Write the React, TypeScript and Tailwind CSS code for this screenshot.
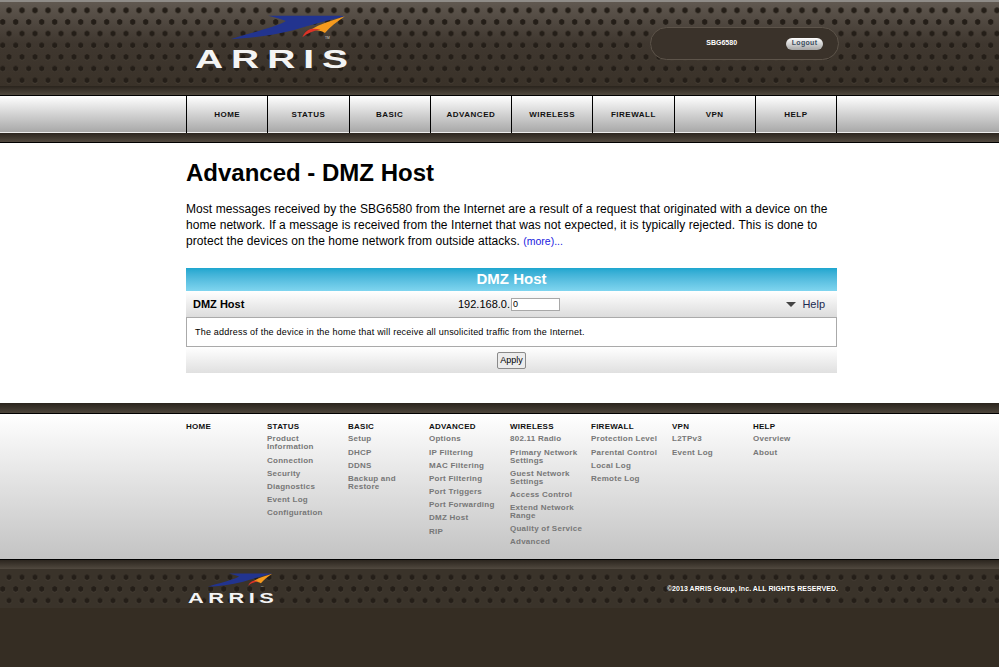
import type { ReactNode } from 'react';

const NAV = ['HOME', 'STATUS', 'BASIC', 'ADVANCED', 'WIRELESS', 'FIREWALL', 'VPN', 'HELP'];

const FOOTER_NAV: { title: string; links: string[] }[] = [
  { title: 'HOME', links: [] },
  { title: 'STATUS', links: ['Product Information', 'Connection', 'Security', 'Diagnostics', 'Event Log', 'Configuration'] },
  { title: 'BASIC', links: ['Setup', 'DHCP', 'DDNS', 'Backup and Restore'] },
  { title: 'ADVANCED', links: ['Options', 'IP Filtering', 'MAC Filtering', 'Port Filtering', 'Port Triggers', 'Port Forwarding', 'DMZ Host', 'RIP'] },
  { title: 'WIRELESS', links: ['802.11 Radio', 'Primary Network Settings', 'Guest Network Settings', 'Access Control', 'Extend Network Range', 'Quality of Service', 'Advanced'] },
  { title: 'FIREWALL', links: ['Protection Level', 'Parental Control', 'Local Log', 'Remote Log'] },
  { title: 'VPN', links: ['L2TPv3', 'Event Log'] },
  { title: 'HELP', links: ['Overview', 'About'] },
];

// perforated metal, two staggered rows of dots in one 13 x 23.33 tile
const DOTS =
  '[background-image:radial-gradient(circle,#241e18_2.4px,transparent_3.1px),radial-gradient(circle,#241e18_2.4px,transparent_3.1px),radial-gradient(circle,#4d453b_2.6px,transparent_3.2px),radial-gradient(circle,#4d453b_2.6px,transparent_3.2px)] [background-size:13px_23.33px] [background-repeat:repeat] [background-position:2.5px_-3.4px,-3.8px_8.3px,2.5px_-3px,-3.8px_8.7px]';

function Logo({ className }: { className: string }) {
  return (
    <svg viewBox="585 40 475 175" className={`overflow-visible ${className}`}>
      <path
        d="M805 48 L1022 48 L1035 50 C985 62 935 76 880 92 C815 108 750 116 692 119 C750 98 820 86 858 64 C845 58 825 53 805 48 Z"
        fill="#22348f"
      />
      <path d="M1035 50 C1000 62 960 72 930 92 C945 90 962 92 975 100 C990 82 1012 66 1035 50 Z" fill="#f59a1e" />
      <path d="M907 113 C912 100 920 92 932 88 C940 87 952 87 962 90 C942 92 922 100 907 113 Z" fill="#dd3326" />
      <text x="975" y="118" fontSize="10" fill="#ccc" fontFamily="'Liberation Sans', sans-serif">TM</text>
      <text
        transform="translate(585 205) scale(1.5 1)"
        fontSize="78"
        fontWeight="700"
        textLength="306"
        fill="#f4f4f4"
        fontFamily="'Liberation Sans', sans-serif"
      >
        ARRIS
      </text>
    </svg>
  );
}

function Band({ children }: { children?: ReactNode }) {
  return (
    <div className="h-[9px] bg-gradient-to-b from-[#2a241d] to-[#51493f]">{children}</div>
  );
}

export default function App() {
  return (
    <div className="h-[667px] w-full overflow-hidden bg-white font-['Liberation_Sans',Arial,sans-serif] text-black">
      {/* header */}
      <header className="bg-gradient-to-b from-[#625a52] via-[#3f372f] to-[#3a3229]">
        <div className="border-t-2 border-[#8f8c88]">
          <div className={`flex h-[84px] items-start ${DOTS}`}>
            <Logo className="ml-[195px] mt-[11px] h-[58.3px] w-[158.3px] shrink-0" />
            <div className="ml-[297px] mt-[25px] flex h-[33px] w-[189px] shrink-0 items-center rounded-full border border-[#5d544a] bg-[#3a322a] pl-[55px]">
              <span className="text-[7px] font-bold text-white">SBG6580</span>
              <button className="ml-[49px] h-[12px] w-[37px] rounded-full bg-gradient-to-b from-white to-[#a5a5a5] text-[7px] font-bold tracking-[0.3px] text-[#3c4e60]">
                Logout
              </button>
            </div>
          </div>
        </div>
      </header>
      <Band />

      {/* main nav */}
      <nav className="h-[38px] border-t border-black bg-gradient-to-b from-white to-[#a6a6a6] shadow-[inset_0_-1px_0_#eee]">
        <div className="ml-[186px] grid h-full w-[651px] grid-cols-8 border-r border-black">
          {NAV.map((item) => (
            <div
              key={item}
              className="flex items-center justify-center border-l border-black text-[8px] font-bold tracking-[0.5px] text-[#111]"
            >
              {item}
            </div>
          ))}
        </div>
      </nav>
      <div className="h-[10px] border-b border-black bg-gradient-to-b from-[#2c261f] to-[#524a40]" />

      {/* content */}
      <main className="h-[260px] pl-[186px]">
        <div className="w-[651px]">
          <h1 className="pt-[15px] text-[24px] font-bold leading-[30px]">Advanced - DMZ Host</h1>
          <p className="mt-[13px] text-[12px] leading-[16px] tracking-[0.06px]">
            Most messages received by the SBG6580 from the Internet are a result of a request that originated with a device on the
            home network. If a message is received from the Internet that was not expected, it is typically rejected. This is done to
            protect the devices on the home network from outside attacks.{' '}
            <a className="text-[10.5px] tracking-normal text-[#1a1ae0]">(more)...</a>
          </p>

          <section className="mt-[19px]">
            <div className="flex h-[23px] items-center justify-center bg-gradient-to-b from-[#1ca6cf] to-[#7fd5ef] text-[15px] font-bold text-white">
              DMZ Host
            </div>
            <div className="flex h-[26px] items-center bg-gradient-to-b from-white to-[#dcdcdc] pl-[7px] pr-[12px] text-[11px]">
              <span className="w-[265px] font-bold">DMZ Host</span>
              <span>192.168.0.</span>
              <input
                readOnly
                value="0"
                className="ml-[1px] h-[13px] w-[49px] border border-[#a8a8a8] bg-white pl-[1px] text-[9px] leading-none"
              />
              <span className="ml-auto mr-[6px] h-0 w-0 border-x-[5.5px] border-t-[5px] border-x-transparent border-t-[#444]" />
              <span className="text-[#1c2a50]">Help</span>
            </div>
            <div className="flex h-[30px] items-center border border-[#aaa] bg-white pl-[8px] pt-[2px] text-[9px] tracking-[0.21px]">
              The address of the device in the home that will receive all unsolicited traffic from the Internet.
            </div>
            <div className="flex h-[26px] items-center justify-center bg-gradient-to-b from-white to-[#e0e0e0]">
              <button className="h-[17px] w-[29px] rounded-[2px] border border-[#8a8a8a] bg-[#ececec] text-[9px] leading-none">
                Apply
              </button>
            </div>
          </section>
        </div>
      </main>

      {/* footer nav */}
      <div className="h-[11px] border-b border-black bg-gradient-to-b from-[#2a241d] to-[#4d453b]" />
      <div className="h-[145px] bg-gradient-to-b from-white to-[#c3c3c3] pl-[186px] pt-[9px]">
        <div className="grid w-[648px] grid-cols-8">
          {FOOTER_NAV.map((col) => (
            <div key={col.title} className="pr-[6px] text-[8px] font-bold tracking-[0.25px]">
              <div className="mb-[3.5px] leading-[8px] text-[#111]">{col.title}</div>
              {col.links.map((link, i) => (
                <div key={link} className={`leading-[8px] text-[#777] ${i === 0 ? 'mb-[6px]' : 'mb-[5.2px]'}`}>
                  {link}
                </div>
              ))}
            </div>
          ))}
        </div>
      </div>

      {/* footer */}
      <div className="h-[10px] border-t border-black bg-gradient-to-b from-[#2c261f] to-[#51493f]" />
      <footer className="h-[98px] bg-[#352d23]">
        <div className={`flex h-[39px] items-start bg-[#3a332a] ${DOTS}`}>
          <Logo className="ml-[188px] mt-[3px] h-[32.7px] w-[88.9px] shrink-0" />
          <span className="ml-[390px] mt-[15px] text-[7px] font-bold tracking-[0.05px] text-white">
            ©2013 ARRIS Group, Inc. ALL RIGHTS RESERVED.
          </span>
        </div>
      </footer>
    </div>
  );
}
